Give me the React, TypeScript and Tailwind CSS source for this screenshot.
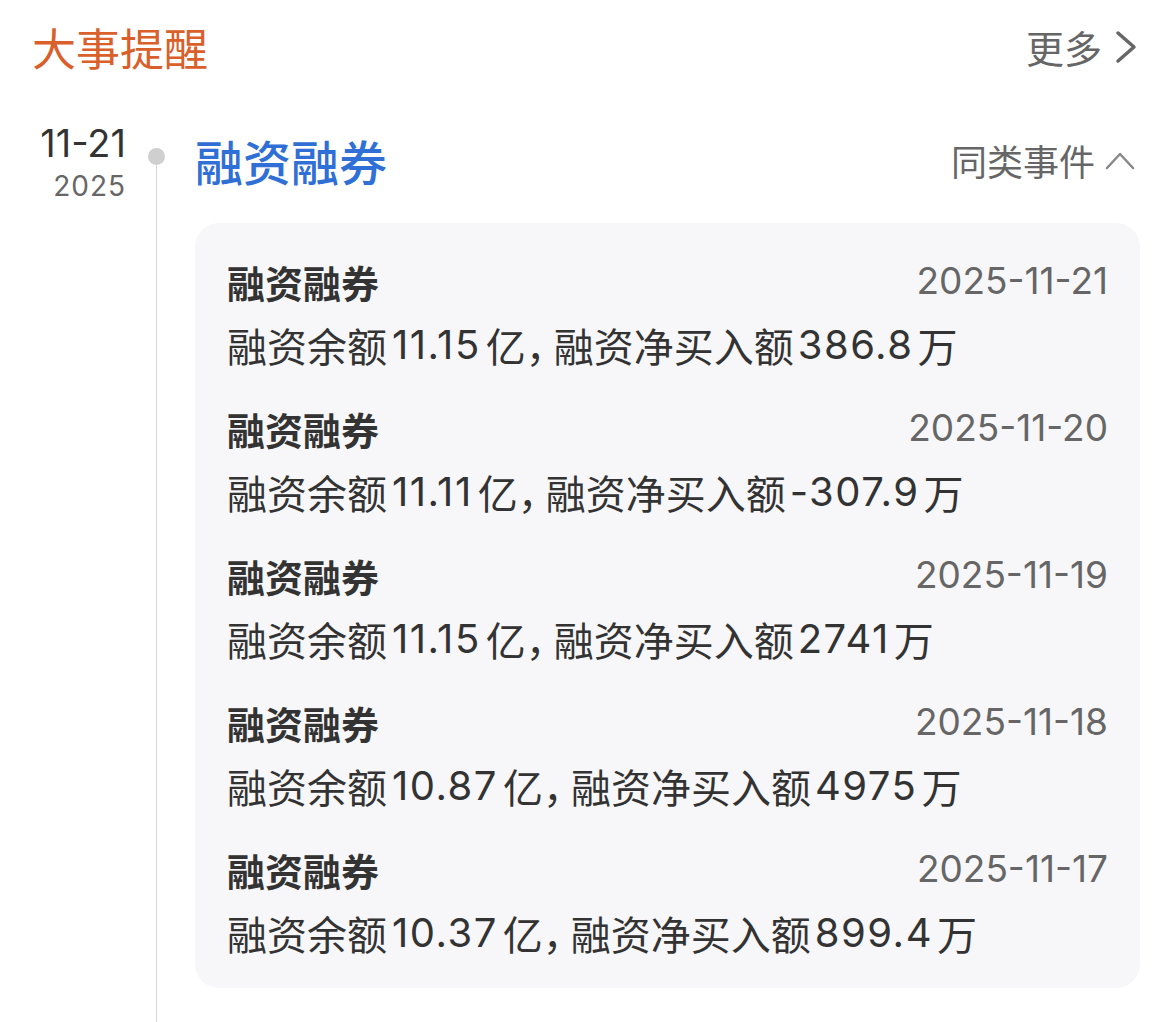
import React from "react";

const items = [
  { date: "2025-11-21", a: "11.15", b: "386.8" },
  { date: "2025-11-20", a: "11.11", b: "-307.9" },
  { date: "2025-11-19", a: "11.15", b: "2741" },
  { date: "2025-11-18", a: "10.87", b: "4975" },
  { date: "2025-11-17", a: "10.37", b: "899.4" },
];

const cjk = { fontFamily: '"Noto Sans CJK SC", sans-serif' };

export default function App() {
  return (
    <div
      className="min-h-[1022px] w-[1170px] bg-white flex flex-col pl-8 pr-[30px]"
      style={{ fontFamily: 'Inter, "Noto Sans CJK SC", sans-serif' }}
    >
      <div className="flex items-center justify-between h-[94px] pr-[2px]">
        <div className="text-[44px] leading-none text-[#d95f2b]" style={cjk}>大事提醒</div>
        <div className="flex items-center gap-[12px] text-[38px] leading-none text-[#666666]" style={cjk}>
          <span>更多</span>
          <svg width="24" height="34" viewBox="0 0 24 34" fill="none">
            <polyline points="4,3 20,17 4,31" stroke="#666666" strokeWidth="3.5" strokeLinecap="round" strokeLinejoin="round" />
          </svg>
        </div>
      </div>
      <div className="flex flex-1 mt-[26px] -ml-8">
        <div className="w-[126px] flex flex-col items-end">
          <div className="text-[38px] leading-[46px] text-[#333333]">11-21</div>
          <div className="text-[28px] leading-[36px] mt-[2px] text-[#666666] tracking-[1px]">2025</div>
        </div>
        <div className="w-[60px] flex flex-col items-center">
          <div className="mt-[28px] w-[17px] h-[17px] rounded-full bg-[#cfcfcf]" />
          <div className="w-px flex-1 bg-[#d6d6d6]" />
        </div>
        <div className="flex-1 ml-[9px] flex flex-col">
          <div className="flex items-center justify-between h-[80px]">
            <div className="text-[48px] font-medium text-[#2f6fd6]" style={cjk}>融资融券</div>
            <div className="flex items-center gap-[10px] text-[36px] text-[#666666] pr-[5px]" style={cjk}>
              <span>同类事件</span>
              <svg width="30" height="20" viewBox="0 0 30 20" fill="none">
                <polyline points="2,18 15,4 28,18" stroke="#888888" strokeWidth="2.5" strokeLinecap="round" strokeLinejoin="round" />
              </svg>
            </div>
          </div>
          <div className="mt-[23px] bg-[#f7f7f9] rounded-[24px] px-8 pt-8 pb-[29px] flex flex-col gap-[31px]">
            {items.map((it) => (
              <div key={it.date} className="flex flex-col gap-[12px]">
                <div className="flex items-center justify-between h-[52px]">
                  <span className="text-[38px] font-bold text-[#333333]" style={cjk}>融资融券</span>
                  <span className="text-[37px] text-[#666666]">{it.date}</span>
                </div>
                <div className="h-[52px] flex items-center text-[40px] text-[#333333] whitespace-nowrap">
                  <span style={cjk}>融资余额</span>
                  <span className="mx-[5px] tracking-[1.5px]">{it.a}</span>
                  <span style={cjk}>亿</span>
                  <span className="tracking-[-12px]" style={cjk}>，</span>
                  <span style={cjk}>融资净买入额</span>
                  <span className="mx-[4px] tracking-[1.5px]">{it.b}</span>
                  <span style={cjk}>万</span>
                </div>
              </div>
            ))}
          </div>
        </div>
      </div>
    </div>
  );
}
